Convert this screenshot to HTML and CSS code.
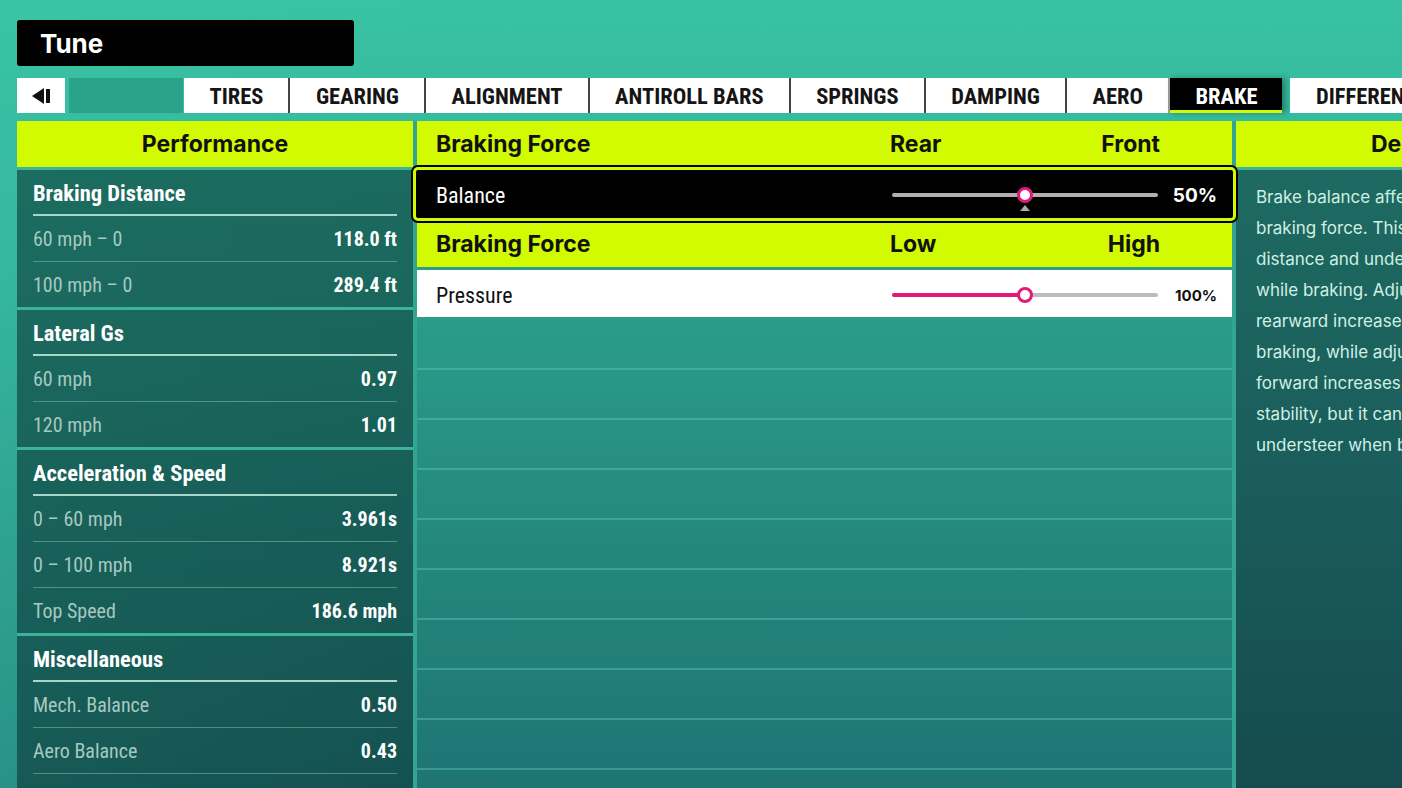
FILE: index.html
```html
<!DOCTYPE html>
<html lang="en">
<head>
  <meta charset="UTF-8" />
  <meta name="viewport" content="width=device-width, initial-scale=1.0" />
  <title>Tune – Brake</title>
  <link rel="stylesheet" href="styles.css">
</head>
<body>
  <div class="title">Tune</div>

  <nav class="tabs">
    <div class="tab back">
      <svg width="18" height="16" viewBox="0 0 18 16"><path d="M12 0 L0 8 L12 16 Z" fill="#111"/><rect x="14" y="1" width="4" height="14" fill="#111"/></svg>
    </div>
    <div class="tab-empty"></div>
    <div class="tab first">TIRES</div>
    <div class="tab">GEARING</div>
    <div class="tab">ALIGNMENT</div>
    <div class="tab">ANTIROLL BARS</div>
    <div class="tab">SPRINGS</div>
    <div class="tab">DAMPING</div>
    <div class="tab">AERO</div>
    <div class="tab active">BRAKE</div>
    <div class="tab next">DIFFERENTIAL</div>
  </nav>

  <main class="tune">
    <section class="perf">
      <h2 class="head">Performance</h2>

      <div class="group">
        <h3>Braking Distance</h3>
        <div class="stat"><span>60 mph – 0</span><b>118.0 ft</b></div>
        <div class="stat"><span>100 mph – 0</span><b>289.4 ft</b></div>
      </div>

      <div class="group">
        <h3>Lateral Gs</h3>
        <div class="stat"><span>60 mph</span><b>0.97</b></div>
        <div class="stat"><span>120 mph</span><b>1.01</b></div>
      </div>

      <div class="group">
        <h3>Acceleration &amp; Speed</h3>
        <div class="stat"><span>0 – 60 mph</span><b>3.961s</b></div>
        <div class="stat"><span>0 – 100 mph</span><b>8.921s</b></div>
        <div class="stat"><span>Top Speed</span><b>186.6 mph</b></div>
      </div>

      <div class="group last">
        <h3>Miscellaneous</h3>
        <div class="stat"><span>Mech. Balance</span><b>0.50</b></div>
        <div class="stat"><span>Aero Balance</span><b>0.43</b></div>
      </div>
    </section>

    <section class="settings">
      <div class="head-row">
        <span class="name">Braking Force</span>
        <span class="ends"><span>Rear</span><span>Front</span></span>
      </div>
      <div class="row selected">
        <span class="name">Balance</span>
        <div class="slider">
          <div class="track"></div>
          <div class="thumb" style="left: 50%"></div>
          <div class="marker" style="left: 50%"></div>
        </div>
        <span class="value">50%</span>
      </div>

      <div class="head-row">
        <span class="name">Braking Force</span>
        <span class="ends"><span>Low</span><span>High</span></span>
      </div>
      <div class="row light">
        <span class="name">Pressure</span>
        <div class="slider">
          <div class="track"></div>
          <div class="fill" style="width: 50%"></div>
          <div class="thumb" style="left: 50%"></div>
        </div>
        <span class="value small">100%</span>
      </div>

      <div class="empty first"></div>
      <div class="empty"></div>
      <div class="empty"></div>
      <div class="empty"></div>
      <div class="empty"></div>
      <div class="empty"></div>
      <div class="empty"></div>
      <div class="empty"></div>
      <div class="empty"></div>
    </section>

    <section class="desc">
      <h2 class="head">Description</h2>
      <p class="desc-body">
        Brake balance affects the distribution of<br>
        braking force. This impacts stopping<br>
        distance and understeer or oversteer<br>
        while braking. Adjusting the balance<br>
        rearward increases rotation under<br>
        braking, while adjusting it<br>
        forward increases braking<br>
        stability, but it can cause<br>
        understeer when braking.
      </p>
    </section>
  </main>
</body>
</html>
```

FILE: styles.css
```css
body {
  margin: 0;
  height: 788px;
  overflow: hidden;
  font-family: Inter, "Liberation Sans", sans-serif;
  background:
    linear-gradient(90deg, rgba(60, 200, 170, 0.25) 0%, rgba(60, 200, 170, 0) 30%),
    linear-gradient(180deg, #39c2a3 0%, #32b19a 35%, #2a9589 70%, #237f7d 100%);
}
.title {
  margin: 20px 0 0 17px;
  width: 337px;
  height: 46px;
  box-sizing: border-box;
  padding: 2px 0 0 23px;
  background: #000;
  color: #fff;
  font-weight: 700;
  font-size: 26px;
  line-height: 44px;
  border-radius: 3px;
}
.tabs {
  display: flex;
  margin: 12px 0 0 17px;
  height: 35px;
  white-space: nowrap;
}
.tab {
  flex-shrink: 0;
  background: #fff;
  color: #151515;
  font-family: "Roboto Condensed", "Liberation Sans Narrow", "DejaVu Sans Condensed", sans-serif;
  font-weight: 700;
  font-size: 22.5px;
  line-height: 36px;
  padding: 0 25px 0 25.5px;
  border-left: 2px solid #444;
}
.tab.back {
  width: 48px;
  box-sizing: border-box;
  padding: 0;
  border: none;
  display: flex;
  align-items: center;
  justify-content: center;
}
.tab.first {
  border-left: none;
  margin-left: 1px;
}
.tab-empty {
  flex-shrink: 0;
  width: 114px;
  margin-left: 4px;
  background: rgba(20, 110, 95, 0.35);
}
.tab.active {
  background: #000;
  color: #fff;
  border-left-color: #999;
  box-shadow: inset 0 -3px 0 #d2fa00, 4px 0 6px rgba(0, 0, 0, 0.3);
}
.tab.next {
  border-left: none;
  margin-left: 8px;
}
.tune {
  display: flex;
  margin: 8px 0 0 17px;
  align-items: flex-start;
}
.head {
  margin: 0;
  height: 46px;
  background: #d2fa00;
  color: #111;
  text-align: center;
  font-size: 23px;
  font-weight: 700;
  line-height: 46px;
}
.perf {
  width: 396px;
  flex-shrink: 0;
}
.group {
  border-top: 3px solid #3cb49c;
  background: rgba(8, 48, 48, 0.57);
  padding: 0 16px;
  font-family: "Roboto Condensed", "Liberation Sans Narrow", "DejaVu Sans Condensed", sans-serif;
}
.group.last {
  padding-bottom: 40px;
}
.group h3 {
  margin: 0;
  height: 44px;
  line-height: 46px;
  color: #fff;
  font-size: 22.5px;
  font-weight: 700;
  border-bottom: 2px solid #a9d6ca;
}
.stat {
  display: flex;
  justify-content: space-between;
  height: 45px;
  line-height: 46px;
  font-size: 20px;
  border-bottom: 1px solid rgba(150, 205, 192, 0.45);
}
.stat:last-child {
  border-bottom: none;
}
.group.last .stat:last-child {
  border-bottom: 1px solid rgba(150, 205, 192, 0.45);
}
.stat span {
  color: #a6c9c0;
}
.stat b {
  color: #fff;
}
.settings {
  width: 815px;
  flex-shrink: 0;
  height: 700px;
  border-left: 4px solid #34a592;
  border-right: 4px solid #34a592;
  background: rgba(10, 60, 60, 0.15);
}
.head-row {
  display: flex;
  align-items: center;
  height: 46px;
  padding: 0 15px 0 19px;
  background: #d2fa00;
  color: #111;
  font-size: 23px;
  font-weight: 700;
}
.name {
  flex: 1;
}
.ends {
  width: 270px;
  display: flex;
  justify-content: space-between;
  margin-right: 57px;
}
.row {
  display: flex;
  align-items: center;
  padding: 0 15px 0 19px;
}
.row .name {
  font-family: "Roboto Condensed", "Liberation Sans Narrow", "DejaVu Sans Condensed", sans-serif;
  font-size: 22px;
}
.row.selected {
  position: relative;
  z-index: 1;
  height: 54px;
  box-sizing: border-box;
  margin: 0 -4px;
  padding: 2px 16px 0 20px;
  background: #000;
  color: #fff;
  border: 3px solid #d2fa00;
  border-radius: 5px;
  box-shadow: 0 0 0 2px #000;
}
.row.light {
  height: 47px;
  box-sizing: border-box;
  padding-top: 3px;
  margin-top: 3px;
  background: #fff;
  color: #111;
}
.slider {
  position: relative;
  width: 266px;
  height: 16px;
}
.track,
.fill {
  position: absolute;
  left: 0;
  top: 6px;
  height: 4px;
  border-radius: 2px;
}
.track {
  width: 100%;
  background: #bcbcbc;
}
.row.selected .track {
  background: #b0b0b0;
}
.fill {
  background: #e5197a;
}
.thumb {
  position: absolute;
  top: 8px;
  width: 10px;
  height: 10px;
  border: 3px solid #e5197a;
  border-radius: 50%;
  background: #fff;
  transform: translate(-50%, -50%);
}
.marker {
  position: absolute;
  top: 18px;
  width: 0;
  height: 0;
  border-left: 5px solid transparent;
  border-right: 5px solid transparent;
  border-bottom: 6px solid #aaa;
  transform: translateX(-50%);
}
.value {
  width: 59px;
  text-align: right;
  font-size: 19px;
  font-weight: 700;
}
.value.small {
  font-size: 15px;
}
.empty {
  height: 48px;
  border-bottom: 2px solid rgba(90, 200, 175, 0.45);
}
.empty.first {
  margin-top: 3px;
}
.desc {
  width: 400px;
  flex-shrink: 0;
}
.desc-body {
  margin: 0;
  height: 620px;
  border-top: 3px solid #3cb49c;
  padding: 12px 20px;
  background: linear-gradient(180deg, #1e6a62 0%, #1a5c5a 50%, #154a4d 100%);
  color: #d0f0e4;
  font-size: 17px;
  line-height: 31px;
  white-space: nowrap;
}
```
